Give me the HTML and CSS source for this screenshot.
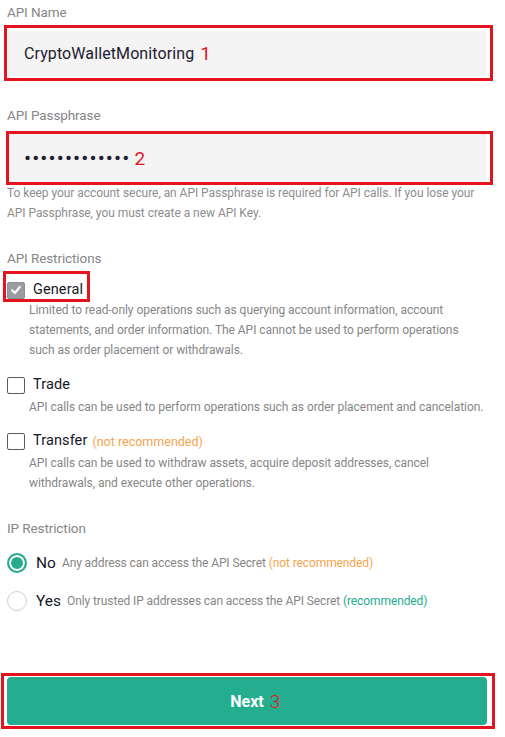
FILE: index.html
```html
<!DOCTYPE html>
<html lang="en">
<head>
<meta charset="utf-8">
<title>API</title>
<link rel="stylesheet" href="styles.css">
</head>
<body>
<div class="page">
  <div class="label first">API Name</div>
  <div class="mark mark-name">
    <div class="field"><span class="value">CryptoWalletMonitoring</span><span class="num">1</span></div>
  </div>

  <div class="label pass">API Passphrase</div>
  <div class="mark mark-pass">
    <div class="field field-pass"><span class="dots">•••••••••••••</span><span class="num">2</span></div>
  </div>
  <p class="help">To keep your account secure, an API Passphrase is required for API calls. If you lose your API Passphrase, you must create a new API Key.</p>

  <div class="label section">API Restrictions</div>
  <div class="mark mark-general">
    <span class="check checked">
      <svg viewBox="0 0 12 12" width="12" height="12"><path d="M2.2 6.3 L4.9 9 L9.8 3" fill="none" stroke="#fff" stroke-width="2.2" stroke-linecap="round" stroke-linejoin="round"/></svg>
    </span>
    <span class="opt">General</span>
  </div>
  <p class="desc desc-general">Limited to read-only operations such as querying account information, account statements, and order information. The API cannot be used to perform operations such as order placement or withdrawals.</p>

  <div class="row row-trade"><span class="check"></span><span class="opt">Trade</span></div>
  <p class="desc">API calls can be used to perform operations such as order placement and cancelation.</p>

  <div class="row row-transfer"><span class="check"></span><span class="opt">Transfer</span><span class="warn">(not recommended)</span></div>
  <p class="desc">API calls can be used to withdraw assets, acquire deposit addresses, cancel withdrawals, and execute other operations.</p>

  <div class="label ip">IP Restriction</div>
  <div class="radio-row row-no"><span class="radio on"></span><span class="ropt">No</span><span class="rdesc">Any address can access the API Secret <span class="warn-s">(not recommended)</span></span></div>
  <div class="radio-row row-yes"><span class="radio"></span><span class="ropt">Yes</span><span class="rdesc">Only trusted IP addresses can access the API Secret <span class="good">(recommended)</span></span></div>

  <div class="mark mark-btn">
    <button class="next" type="button"><span class="next-text">Next<span class="num3">3</span></span></button>
  </div>
</div>
</body>
</html>
```
FILE: styles.css
```css
* { box-sizing: border-box; }
html, body { margin: 0; padding: 0; background: #fff; }
body {
  font-family: Roboto, "Liberation Sans", Arial, sans-serif;
  color: #1b1d2b;
  width: 505px;
}
.page { padding: 0 0 0 7px; }

.label {
  font-size: 13.5px;
  line-height: 20px;
  color: #868686;
  letter-spacing: -0.1px;
}
.label.first { margin-top: 2px; }
.label.pass { margin-top: 24px; }
.label.section { margin-top: 25px; }
.label.ip { margin-top: 25px; }

.mark { border: 3px solid #e3141f; }

.mark-name {
  margin: 3px 0 0 -3px;
  width: 489px;
  padding: 3px 4px 2px 1px;
}
.mark-pass {
  margin: 6px 0 0 -1px;
  width: 487px;
  padding: 0 4px 0 0;
}
.field {
  background: #f4f4f4;
  border-radius: 3px;
  height: 45px;
  display: flex;
  align-items: center;
  padding-left: 16px;
  font-size: 16px;
  letter-spacing: 0.1px;
  color: #1e2030;
}
.field-pass { height: 48px; padding-left: 15px; border-radius: 0; }
.dots {
  font-size: 21px;
  letter-spacing: 1.1px;
  color: #1e2030;
}
.num {
  color: #e3141f;
  font-size: 19px;
  margin-left: 6px;
  font-weight: 400;
  letter-spacing: 0;
}
.field-pass .num { margin-left: 4px; }

.help {
  margin: -2px 0 0 0;
  font-size: 12px;
  line-height: 20px;
  color: #8d8d8d;
  letter-spacing: -0.05px;
  width: 470px;
}

.check {
  display: inline-flex;
  align-items: center;
  justify-content: center;
  width: 18px;
  height: 17px;
  border: 1px solid #5b5b63;
  border-radius: 2px;
  background: #fff;
  flex: none;
}
.check.checked {
  background: #9b9ba3;
  border-color: #8e8e96;
}
.opt {
  font-size: 14.5px;
  line-height: 18px;
  margin-left: 8px;
  color: #151827;
  letter-spacing: 0.1px;
}

.mark-general {
  display: inline-flex;
  align-items: center;
  margin: 3px 0 0 -4px;
  padding: 7px 4px 0 1px;
  height: 31px;
}

.desc {
  margin: 0 0 0 22px;
  font-size: 12px;
  line-height: 20px;
  color: #868686;
  letter-spacing: -0.05px;
  width: 458px;
}
.desc-general { margin-top: -2px; width: 445px; }

.row {
  display: flex;
  align-items: center;
  height: 20px;
}
.row-trade { margin-top: 15px; }
.row-trade + .desc { margin-top: 2px; }
.row-transfer { margin-top: 14px; }
.row-transfer + .desc { margin-top: 2px; }
.warn {
  color: #f5a44e;
  font-size: 12.5px;
  margin-left: 5px;
}

.radio-row {
  display: flex;
  align-items: center;
  height: 20px;
}
.row-no { margin-top: 15px; }
.row-yes { margin-top: 18px; }
.radio {
  width: 20px;
  height: 20px;
  border-radius: 50%;
  border: 1px solid #cfcfcf;
  background: #fff;
  flex: none;
}
.radio.on {
  border: 2px solid #26ac8d;
  background: #26ac8d;
  box-shadow: inset 0 0 0 2px #fff;
}
.ropt {
  margin-left: 9px;
  font-size: 15.5px;
  color: #151827;
}
.rdesc {
  margin-left: 6px;
  font-size: 12px;
  color: #868686;
  letter-spacing: -0.1px;
}
.warn-s { color: #f5a44e; }
.good { color: #26ac8d; }

.mark-btn {
  margin: 62px 0 0 -6px;
  width: 494px;
  padding: 1px 5px 1px 3px;
}
.next {
  display: flex;
  align-items: center;
  justify-content: center;
  width: 100%;
  height: 48px;
  border: 0;
  border-radius: 4px;
  background: #24ae8f;
  color: #fff;
  font-family: Roboto, "Liberation Sans", Arial, sans-serif;
  font-size: 16px;
  font-weight: 700;
  padding: 0;
}
.next-text { position: relative; }
.num3 {
  position: absolute;
  left: 100%;
  top: -2px;
  margin-left: 6px;
  color: #e3141f;
  font-weight: 300;
  font-size: 19px;
}
```
